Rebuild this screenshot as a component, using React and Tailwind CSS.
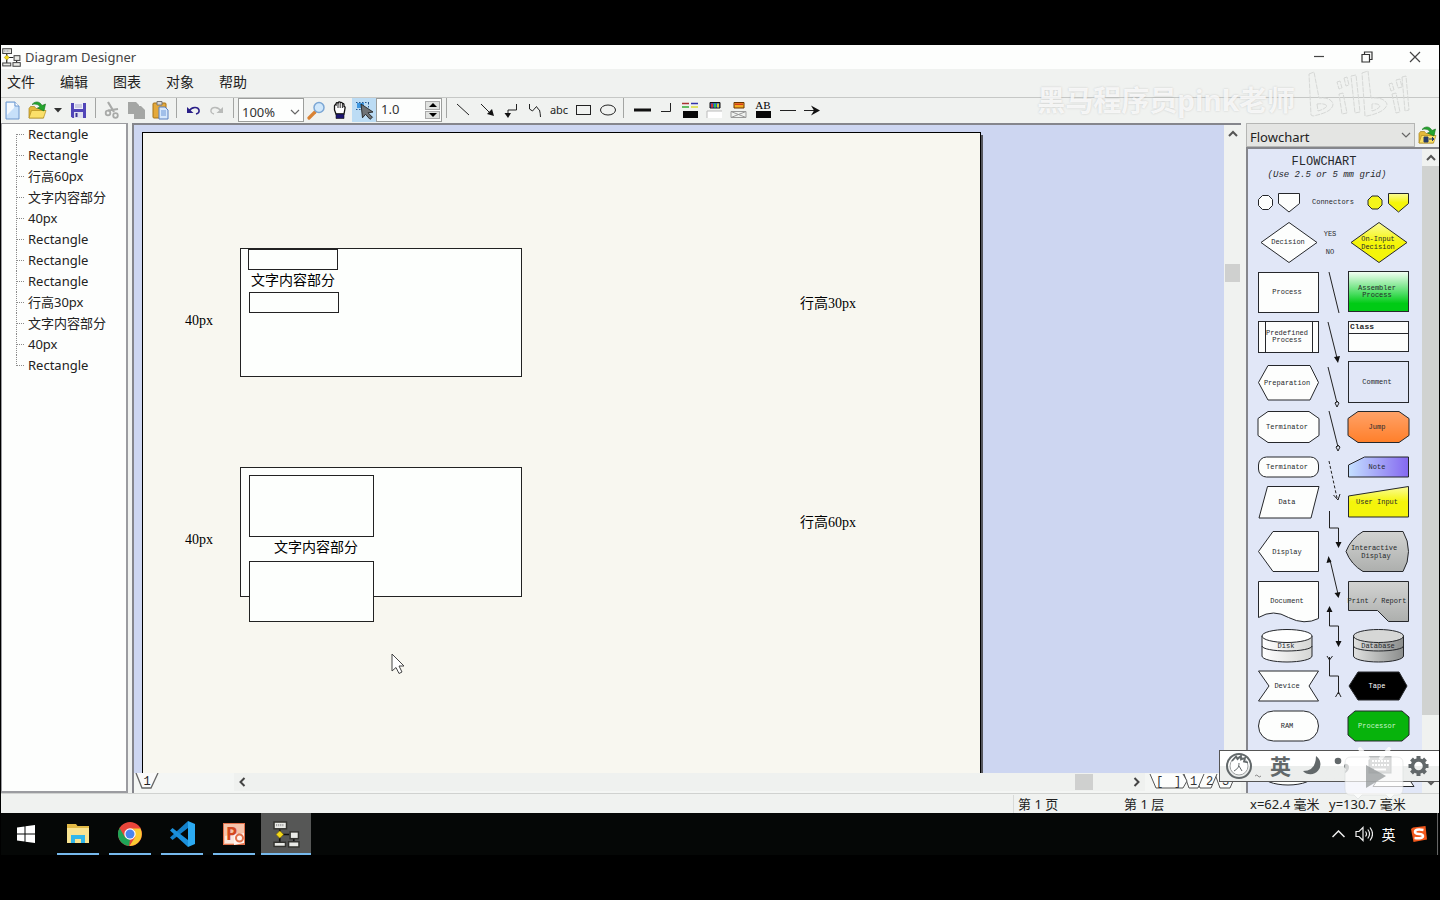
import React from "react";

const outline = { fill: "none", stroke: "#222", strokeWidth: 1 };

function ToolButton({ label, children, active }) {
  return (
    <button
      type="button"
      aria-label={label}
      title={label}
      className={
        active
          ? "flex h-6 w-6 shrink-0 items-center justify-center bg-[#bcdcf4]"
          : "flex h-6 w-6 shrink-0 items-center justify-center"
      }
    >
      <svg width="20" height="20" viewBox="0 0 20 20" aria-hidden="true">
        {children}
      </svg>
    </button>
  );
}

function Separator() {
  return (
    <div className="flex w-[9px] shrink-0 justify-center">
      <div className="h-5 w-px bg-[#a3a5a3]" />
    </div>
  );
}

function Chevron({ className }) {
  return (
    <svg width="10" height="6" viewBox="0 0 10 6" className={className} aria-hidden="true">
      <path d="M1 1l4 4 4-4" fill="none" stroke="#666" strokeWidth="1.2" />
    </svg>
  );
}

function DiagramLogo({ size, line, frame }) {
  return (
    <svg width={size} height={size} viewBox="0 0 26 26" aria-hidden="true">
      <path d="M6.500 8v10M6.500 13h9M6.500 18v3M20 17v4" stroke={line} strokeWidth="1.600" fill="none" />
      <g fill="#e9eae6" stroke={frame} strokeWidth="1.400">
        <rect x="1" y="1" width="12" height="6.500" />
        <rect x="16.500" y="10.500" width="8" height="6.500" />
        <rect x="1" y="20.500" width="11" height="4" />
        <rect x="15" y="20" width="10" height="5" />
      </g>
      <path d="M3 4h8" stroke="#999" strokeDasharray="1 1" strokeWidth="2" />
      <path d="M6.500 9.500l3.500 3.500-3.500 3.500L3 13z" fill="#f3d81b" stroke="#8a7400" strokeWidth="0.600" />
    </svg>
  );
}

function FolderArt() {
  return (
    <>
      <path d="M2 8.500l1.500-2h4l1.500 2h7.500V18H2z" fill="#e4b93a" stroke="#a8821a" strokeWidth=".7" />
      <path d="M2 18l2.500-7.500H19L16.500 18z" fill="#fbe06a" stroke="#b08c1e" strokeWidth=".7" />
      <path d="M5 4.500C8.500 .5 13 1.500 15 5.500l3.500-1.500-1.500 7L10.500 8l2.500-1C12 4.500 9 3.500 5 4.500z" fill="#25a52e" stroke="#127119" strokeWidth=".6" />
    </>
  );
}

const tree = [
  "Rectangle", "Rectangle", "行高60px", "文字内容部分", "40px", "Rectangle",
  "Rectangle", "Rectangle", "行高30px", "文字内容部分", "40px", "Rectangle",
];

function ObjectTree() {
  return (
    <aside className="w-[127px] shrink-0 overflow-hidden border-t border-r-2 border-b-2 border-l border-[#9b9ca0] bg-[#fdfefd]">
      <ul>
        {tree.map((name, i) => (
          <li key={i} className="flex h-[21px] items-center pl-3.5 text-[13px] text-[#222]">
            <svg width="10" height="21" viewBox="0 0 10 21" className="mr-[2px] shrink-0" aria-hidden="true">
              <path
                d={`M.5 ${i === 0 ? 10 : 0}V${i === tree.length - 1 ? 11 : 21}M1 10.500H9`}
                fill="none"
                stroke="#8b8b8b"
                strokeDasharray="1 1"
              />
            </svg>
            <span className="whitespace-nowrap">{name}</span>
          </li>
        ))}
      </ul>
    </aside>
  );
}

function Sheet() {
  const label = "absolute whitespace-nowrap font-['Liberation_Serif','Noto_Sans_CJK_SC',serif] text-[14px] leading-5 text-black";
  const box = "absolute border border-[#222] bg-[#fdfffd]";
  return (
    <div className="relative h-full w-[839px] border-x border-t border-black bg-[#f8f7f0] shadow-[2px_3px_0_#55565c]">
      <div className={`${box} top-[115px] left-[97px] h-[129px] w-[282px]`} />
      <div className={`${box} top-[116px] left-[105px] h-[21px] w-[90px]`} />
      <div className={`${box} top-[159px] left-[106px] h-[21px] w-[90px]`} />
      <span className={`${label} top-[138px] left-[108px]`}>文字内容部分</span>
      <span className={`${label} top-[178px] left-[42px]`}>40px</span>
      <span className={`${label} top-[161px] left-[657px]`}>行高30px</span>

      <div className={`${box} top-[334px] left-[97px] h-[130px] w-[282px]`} />
      <div className={`${box} top-[342px] left-[106px] h-[62px] w-[125px]`} />
      <div className={`${box} top-[428px] left-[106px] h-[61px] w-[125px]`} />
      <span className={`${label} top-[405px] left-[131px]`}>文字内容部分</span>
      <span className={`${label} top-[397px] left-[42px]`}>40px</span>
      <span className={`${label} top-[380px] left-[657px]`}>行高60px</span>

      <svg width="14" height="22" viewBox="0 0 14 22" className="absolute top-[520px] left-[248px]" aria-hidden="true">
        <path d="M1 1v17l4-3.500 3 6 3-1.500-3-6h5z" fill="#fff" stroke="#444" strokeWidth="1" />
      </svg>
    </div>
  );
}

function Canvas() {
  return (
    <main className="flex min-w-0 flex-1 flex-col border-t-2 border-l-2 border-[#85868c]">
      <div className="flex min-h-0 flex-1">
        <div className="min-w-0 flex-1 overflow-hidden bg-[#cdd6f1] pt-[7px] pl-2">
          <Sheet />
        </div>
        <div className="flex w-[17px] shrink-0 flex-col bg-[#f0f2f0]">
          <button type="button" aria-label="向上滚动" className="flex h-[17px] items-center justify-center">
            <svg width="10" height="8" viewBox="0 0 10 8" aria-hidden="true">
              <path d="M1 6l4-4 4 4" fill="none" stroke="#555" strokeWidth="2" />
            </svg>
          </button>
          <div className="mx-px mt-[122px] h-[18px] bg-[#cfd0cf]" />
        </div>
      </div>
      <div className="flex h-5 shrink-0 items-start bg-[#f4f6f4]">
        <button type="button" aria-label="第 1 页" className="w-[100px]">
          <svg width="30" height="18" viewBox="0 0 30 18" aria-hidden="true">
            <path d="M2 0l6 15h9l7-15" fill="#fafafa" stroke="#666" strokeWidth="1.300" />
            <text x="13" y="12" textAnchor="middle" fontFamily="Liberation Mono, monospace" fontSize="12" fill="#222">1</text>
          </svg>
        </button>
        <div className="flex h-[18px] min-w-0 flex-1 items-center justify-between bg-[#eff1ef] px-1">
          <button type="button" aria-label="向左滚动">
            <svg width="8" height="10" viewBox="0 0 8 10" aria-hidden="true">
              <path d="M6.500 1L2.500 5l4 4" fill="none" stroke="#444" strokeWidth="2" />
            </svg>
          </button>
          <div className="mr-10 ml-auto h-4 w-[18px] bg-[#cfd0cf]" />
          <button type="button" aria-label="向右滚动">
            <svg width="8" height="10" viewBox="0 0 8 10" aria-hidden="true">
              <path d="M1.500 1l4 4-4 4" fill="none" stroke="#444" strokeWidth="2" />
            </svg>
          </button>
        </div>
        <svg width="96" height="18" viewBox="0 0 96 18" className="shrink-0" role="img" aria-label="图层">
          <g fill="#fcfdfc" stroke="#555" strokeWidth="1">
            <path d="M70 1l5 14h10l6-14" />
            <path d="M55 1l-3 7 3 7h11l6-14" />
            <path d="M39 1l5 14h9l6-14" />
            <path d="M5 1l6 14h27l4-7-4-7" />
          </g>
          <g fontFamily="Liberation Mono, monospace" fontSize="12" fill="#333">
            <text x="11" y="12">[</text>
            <text x="29" y="12">]</text>
            <text x="45" y="12">1</text>
            <text x="61" y="12">2</text>
            <text x="77" y="12">3</text>
          </g>
        </svg>
      </div>
    </main>
  );
}

function T({ x, y, fill = "#26282c", children, ...rest }) {
  return (
    <text x={x} y={y} fill={fill} textAnchor="middle" {...rest}>
      {children}
    </text>
  );
}

function Octagon({ x, y, h, fill, c = 10, d = 7 }) {
  return <path d={`M${x + c} ${y}h${61 - 2 * c}l${c} ${d}v${h - 2 * d}l-${c} ${d}h-${61 - 2 * c}l-${c}-${d}v-${h - 2 * d}z`} fill={fill} />;
}

function Cylinder({ x, fill, top }) {
  return (
    <g>
      <path d={`M${x} 636v20a25 6 0 0 0 50 0v-20z`} fill={fill} />
      <path d={`M${x} 646a25 5 0 0 0 50 0`} fill="none" />
      <ellipse cx={x + 25} cy="636" rx="25" ry="6.500" fill={top} />
    </g>
  );
}

function ShapePalette() {
  return (
    <svg width="174" height="645" viewBox="1248 149 174 645" className="block shrink-0" role="img" aria-label="Flowchart">
      <defs>
        <linearGradient id="green" x2="0" y2="1"><stop offset="0" stopColor="#f6fff6" /><stop offset=".55" stopColor="#4bdd62" /><stop offset=".8" stopColor="#00cb15" /></linearGradient>
        <linearGradient id="yellow" x2="0" y2="1"><stop offset="0" stopColor="#fbfc9a" /><stop offset=".5" stopColor="#f5f50a" /></linearGradient>
        <linearGradient id="orange" x2="0" y2="1"><stop offset="0" stopColor="#ffa268" /><stop offset="1" stopColor="#ff7f2a" /></linearGradient>
        <linearGradient id="blue"><stop offset="0" stopColor="#c4e0ff" /><stop offset="1" stopColor="#8468f0" /></linearGradient>
        <linearGradient id="gray" x2="0" y2="1"><stop offset="0" stopColor="#d2d3d2" /><stop offset="1" stopColor="#adafad" /></linearGradient>
        <linearGradient id="steel"><stop offset="0" stopColor="#e0e1e0" /><stop offset="1" stopColor="#8b8d8c" /></linearGradient>
        <linearGradient id="silver"><stop offset="0" stopColor="#fff" /><stop offset="1" stopColor="#d5d6d4" /></linearGradient>
      </defs>
      <g stroke="#25272b" strokeWidth="1" fill="#fdfefd">
        <path d="M1262.500 195.500h6l4 4v6l-4 4h-6l-4-4v-6z" />
        <path d="M1278.500 193.500h21v10l-10.500 8.500-10.500-8.500z" />
        <path d="M1372 196h6l4 4v5l-4 4h-6l-4-4v-5z" fill="#f5f51c" />
        <path d="M1388.500 193.500h20v10l-10 8.500-10-8.500z" fill="url(#yellow)" />
        <path d="M1289 222.500l28 20-28 20-28-20z" />
        <path d="M1379 222.500l28 20-28 20-28-20z" fill="url(#yellow)" />
        <rect x="1258.500" y="272.500" width="60" height="40" />
        <rect x="1348.500" y="271.500" width="60" height="40" fill="url(#green)" />
        <rect x="1258.500" y="321.500" width="60" height="31" />
        <path d="M1265.500 321.500v31M1312.500 321.500v31" />
        <rect x="1348.500" y="321.500" width="60" height="30" />
        <path d="M1348 333.500h61" />
        <path d="M1268 365.500h42l8.500 17-8.500 17.500h-42l-9.500-17.500z" />
        <rect x="1348.500" y="361.500" width="60" height="41" fill="none" />
        <Octagon x={1258} y={411.5} h={31} fill="#fdfefd" />
        <Octagon x={1348} y={411.5} h={31} fill="url(#orange)" />
        <rect x="1258.500" y="457" width="60" height="20" rx="8" />
        <path d="M1348.500 465l16-8h44v20h-60z" fill="url(#blue)" />
        <path d="M1267.500 486.500h51.500l-8 31.500h-52z" />
        <path d="M1348.500 496l60-9.500v30.500h-60z" fill="url(#yellow)" />
        <path d="M1273 531.500h45.500v40h-45.500l-14.500-20z" />
        <path d="M1363 531.500h40q5.500 9 5.500 20t-5.500 20h-40q-12-7-17-20 5-13 17-20z" fill="url(#gray)" />
        <path d="M1258.500 581.500h60v37q-14 7-30-1-15-9-30 0z" />
        <path d="M1348.500 581.500h60v40h-20l-11-11h-29z" fill="url(#gray)" />
        <Cylinder x={1262} fill="url(#silver)" top="#fff" />
        <Cylinder x={1353.5} fill="url(#steel)" top="#d6d7d6" />
        <path d="M1258.500 671h60l-9.500 15 9.500 15h-60l10.500-15z" />
        <path d="M1358 672h41l8 14-8 14h-41l-9-14z" fill="#000" />
        <rect x="1258.500" y="711" width="60" height="30" rx="15" />
        <Octagon x={1348} y={711} h={30} c={7} d={6} fill="#07b30c" />
        <ellipse cx="1288" cy="775" rx="26" ry="10" />
        <path d="M1373 786.500h41l-8-12h-25z" />
      </g>
      <g stroke="#222" fill="none">
        <path d="M1329 272l10 41M1328 322l9 36M1328 367l9 36M1329 411l9 36" />
        <path d="M1329 461l8 37" strokeDasharray="3 2" />
        <path d="M1335 403l2 4 2-4-2-2zM1336 447l2 4 2-4-2-2zM1333.500 495l4.500 5 2-6" />
        <path d="M1329.500 511v17h9v15M1330 560l8 34M1329.500 610v16h9v17M1329.500 657v19h9v18" />
        <path d="M1327 656l2.500 4 3-4M1335.500 697l3-5 2.500 5" />
      </g>
      <g fill="#111">
        <path d="M1334 357l6-1-2 7zM1335.500 542h6l-3 6zM1326.500 563l5-1-3-6zM1334.500 593l6-1-2 6zM1326.500 612h6l-3-6zM1335.500 641h6l-3 6z" />
      </g>
      <g fontFamily="Liberation Mono, monospace" fontSize="7">
        <T x="1324" y="165" fontSize="12">FLOWCHART</T>
        <T x="1327" y="177" fontSize="9" fontStyle="italic">(Use 2.5 or 5 mm grid)</T>
        <T x="1333" y="204">Connectors</T>
        <T x="1288" y="244">Decision</T>
        <T x="1330" y="236">YES</T>
        <T x="1330" y="254">NO</T>
        <T x="1378" y="241">On-Input</T>
        <T x="1378" y="249">Decision</T>
        <T x="1287" y="294">Process</T>
        <T x="1377" y="290">Assembler</T>
        <T x="1377" y="297">Process</T>
        <T x="1287" y="335">Predefined</T>
        <T x="1287" y="342">Process</T>
        <T x="1362" y="329" fontSize="8" fontWeight="bold">Class</T>
        <T x="1287" y="385">Preparation</T>
        <T x="1377" y="384">Comment</T>
        <T x="1287" y="429">Terminator</T>
        <T x="1377" y="429">Jump</T>
        <T x="1287" y="469">Terminator</T>
        <T x="1377" y="469">Note</T>
        <T x="1287" y="504">Data</T>
        <T x="1377" y="504">User Input</T>
        <T x="1287" y="554">Display</T>
        <T x="1374" y="550">Interactive</T>
        <T x="1376" y="558">Display</T>
        <T x="1287" y="603">Document</T>
        <T x="1377" y="603">Print / Report</T>
        <T x="1286" y="648">Disk</T>
        <T x="1378" y="648">Database</T>
        <T x="1287" y="688">Device</T>
        <T x="1377" y="688" fill="#fff">Tape</T>
        <T x="1287" y="728">RAM</T>
        <T x="1377" y="728" fill="#c8f4ca">Processor</T>
      </g>
    </svg>
  );
}

function PalettePanel() {
  return (
    <aside className="flex w-[193px] shrink-0 flex-col">
      <div className="flex h-6 shrink-0">
        <div className="relative flex-1 border border-[#b5b6b4] bg-[#e4e5e3]">
          <select aria-label="Flowchart" className="h-full w-full appearance-none bg-transparent px-[3px] pb-1 text-[13px] leading-5 text-[#222]">
            <option>Flowchart</option>
          </select>
          <Chevron className="pointer-events-none absolute top-2 right-[3px]" />
        </div>
        <ToolButton label="打开模板">
          <FolderArt />
          <path d="M7 12h4v5H7zM12 14h5m-2-2l2 2-2 2" fill="#263c6a" stroke="#263c6a" />
        </ToolButton>
      </div>
      <div className="flex min-h-0 flex-1 overflow-hidden border-t-2 border-l-2 border-[#85868c] bg-[#e1e7f7]">
        <ShapePalette />
        <div className="flex min-w-0 flex-1 flex-col bg-[#f0f2f0]">
          <button type="button" aria-label="向上滚动模板" className="flex h-[17px] shrink-0 items-center justify-center">
            <svg width="10" height="8" viewBox="0 0 10 8" aria-hidden="true">
              <path d="M1 6l4-4 4 4" fill="none" stroke="#555" strokeWidth="2" />
            </svg>
          </button>
          <div className="h-[549px] shrink-0 bg-[#d0d2d0]" />
          <button type="button" aria-label="向下滚动模板" className="mt-auto flex h-[22px] items-center justify-center">
            <svg width="10" height="8" viewBox="0 0 10 8" aria-hidden="true">
              <path d="M1 2l4 4 4-4" fill="none" stroke="#555" strokeWidth="2" />
            </svg>
          </button>
        </div>
      </div>
    </aside>
  );
}

function Toolbar() {
  return (
    <div className="flex h-[25px] shrink-0 items-start overflow-hidden bg-[#f0f2f0]" role="toolbar">
      <ToolButton label="新建">
        <path d="M3 2h9l4 4v13H3z" fill="#c7e0fa" stroke="#6d97ce" />
        <path d="M4 3h7v5L4 15z" fill="#fff" opacity=".8" />
        <path d="M12 2v4h4" fill="#fff" stroke="#6d97ce" />
      </ToolButton>
      <ToolButton label="打开"><FolderArt /></ToolButton>
      <button type="button" aria-label="最近的文件" className="flex h-6 w-[18px] items-center justify-center">
        <svg width="8" height="5" viewBox="0 0 8 5" aria-hidden="true"><path d="M0 0h8L4 4.500z" fill="#333" /></svg>
      </button>
      <ToolButton label="保存">
        <path d="M2 3h15v15H3.500L2 16.500z" fill="#5146b8" />
        <path d="M5 3h9v6H5z" fill="#eef0fb" /><path d="M6 5h7M6 7h7" stroke="#a6a6c8" />
        <path d="M5 12h9v6H5z" fill="#dfe0f0" /><path d="M6.500 13h2v4h-2z" fill="#3d3494" />
      </ToolButton>
      <Separator />
      <ToolButton label="剪切">
        <path d="M6 2l6 10M16 9l-10 1.500" stroke="#a8aaa8" strokeWidth="2.200" />
        <circle cx="13.500" cy="15.500" r="2.300" fill="none" stroke="#a8aaa8" strokeWidth="1.800" />
        <circle cx="6" cy="13" r="2.300" fill="none" stroke="#a8aaa8" strokeWidth="1.800" />
      </ToolButton>
      <ToolButton label="复制">
        <path d="M2 2h8l3 3v1h2l4 4v9H8v-5H2z" fill="#a4a6a4" />
      </ToolButton>
      <ToolButton label="粘贴">
        <rect x="3" y="3" width="13" height="15" rx="1" fill="#e4a93b" stroke="#a67216" />
        <path d="M7 1.500h5V5H7z" fill="#d9d9d9" stroke="#777" />
        <path d="M9 7h6l3 3v9H9z" fill="#d6e7fb" stroke="#587fc0" /><path d="M11 11h5M11 13h5M11 15h5" stroke="#6d97d8" />
      </ToolButton>
      <Separator />
      <ToolButton label="撤销">
        <path d="M6 11c3-4.500 9-4.500 10-1 .4 2-1 3.500-3 4" fill="none" stroke="#2a1f88" strokeWidth="1.600" />
        <path d="M4 7v6h6.500z" fill="#2a1f88" />
      </ToolButton>
      <ToolButton label="重做">
        <path d="M14 11c-3-4.500-9-4.500-10-1-.4 2 1 3.500 3 4" fill="none" stroke="#b9bbb9" strokeWidth="1.400" />
        <path d="M16 7v6H9.500z" fill="#b9bbb9" />
      </ToolButton>
      <Separator />
      <div className="relative h-6 w-[66px] shrink-0 border border-[#9c9e9c] bg-[#fdfefd]">
        <select aria-label="缩放" className="h-full w-full appearance-none bg-transparent pb-1 pl-[3px] text-[13px] leading-5 text-[#333]">
          <option>100%</option>
        </select>
        <Chevron className="pointer-events-none absolute top-[10px] right-[3px]" />
      </div>
      <ToolButton label="缩放工具">
        <path d="M3 18l6-6" stroke="#d98234" strokeWidth="3.200" strokeLinecap="round" />
        <circle cx="13" cy="7.500" r="5" fill="#cfe7fb" stroke="#7ba6d4" strokeWidth="1.500" />
      </ToolButton>
      <ToolButton label="平移">
        <path d="M6 14L4.500 10V6q0-1.500 1.500-1V3.500Q7 2 8 3.200 9 1 10.500 2.500 12 2 12.500 3.500q1.500-.3 1.500 1.500v1.500q1.500 0 1 2L14 14z" fill="#fff" stroke="#111" strokeWidth="1.300" />
        <path d="M8 3.500V8M10.200 3V8M12.400 4V8" stroke="#111" strokeWidth=".9" />
        <path d="M6 14h8v4.500H6z" fill="#1b1470" stroke="#111" strokeWidth=".6" />
      </ToolButton>
      <ToolButton label="选择" active>
        <path d="M3 3h7v5H3z" fill="#3f97e0" /><path d="M2 2.500h13M2 9.500h8M14.500 3v5" stroke="#26568c" strokeDasharray="1.500 1.500" />
        <path d="M7 4l12 8-5 .8 4.500 4.500-2.500 2-4.500-5-3 3.500z" fill="#6f7275" stroke="#222" strokeWidth=".9" />
      </ToolButton>
      <div className="flex h-6 w-[66px] shrink-0 border border-[#9c9e9c] bg-[#fdfefd] p-px">
        <input aria-label="线宽" defaultValue="1.0" className="w-0 min-w-0 flex-1 bg-transparent pl-[3px] text-[13px] text-[#333] outline-none" />
        <div className="flex w-[15px] flex-col gap-px py-px">
          <button type="button" aria-label="增加" className="flex flex-1 items-center justify-center border border-[#aaa] bg-[#e0e2e0]">
            <svg width="8" height="4" viewBox="0 0 8 4" aria-hidden="true"><path d="M4 0l4 4H0z" /></svg>
          </button>
          <button type="button" aria-label="减少" className="flex flex-1 items-center justify-center border border-[#aaa] bg-[#e0e2e0]">
            <svg width="8" height="4" viewBox="0 0 8 4" aria-hidden="true"><path d="M0 0h8L4 4z" /></svg>
          </button>
        </div>
      </div>
      <Separator />
      <ToolButton label="直线"><path d="M4 4l12 11" {...outline} /></ToolButton>
      <ToolButton label="箭头"><path d="M4 4l9 9" {...outline} /><path d="M17 16l-2-7-5 5z" fill="#111" /></ToolButton>
      <ToolButton label="折线"><path d="M15.500 4v6H7v5" {...outline} /><path d="M3.500 13H10L7 18z" fill="#111" /></ToolButton>
      <ToolButton label="曲线"><path d="M4.500 4v5l3 2 4-4.500q1.500 3 3 3.500.8 3 1 7" {...outline} /></ToolButton>
      <button type="button" aria-label="文本" className="h-6 w-6 shrink-0 text-center text-[11px] leading-5 text-[#222]">abc</button>
      <ToolButton label="矩形"><rect x="3.500" y="5.500" width="14" height="9" {...outline} /></ToolButton>
      <ToolButton label="椭圆"><ellipse cx="11" cy="10" rx="7.500" ry="5" {...outline} /></ToolButton>
      <Separator />
      <div className="flex pl-0.5">
        <ToolButton label="线型"><path d="M2 10h17" stroke="#111" strokeWidth="3" /></ToolButton>
        <ToolButton label="转角"><path d="M5 11.500h9.500V3" {...outline} /></ToolButton>
        <ToolButton label="线条颜色">
          <path d="M2 3.500h7" stroke="#a33" strokeWidth="1.500" /><path d="M11 3.500h7" stroke="#33a" strokeWidth="1.500" /><path d="M2 7h7" stroke="#3a3" strokeWidth="1.500" /><path d="M11 7h7" stroke="#dd3" strokeWidth="1.500" />
          <path d="M3 11h15v7H3z" fill="#080808" />
        </ToolButton>
        <ToolButton label="填充颜色">
          <path d="M6 2.500h10v5.500H6z" fill="#2458c8" stroke="#111" /><path d="M7 3.500h2v4H7z" fill="#c33" /><path d="M10 3.500h2v4h-2z" fill="#3b4" /><path d="M13 3.500h2v4h-2z" fill="#dc3" />
          <path d="M3 11h15v7H3z" fill="#fff" /><path d="M3 18v-7h15" fill="none" stroke="#bbb" />
        </ToolButton>
        <ToolButton label="渐变颜色">
          <path d="M6 2.500h10v5.500H6z" fill="#f2a922" stroke="#6a3200" /><path d="M7 3.500h8V5H7z" fill="#d43b1c" />
          <path d="M3 11.500h15v6H3zM3 11.500l15 6M18 11.500l-15 6" fill="none" stroke="#999" />
        </ToolButton>
        <ToolButton label="文字颜色">
          <text x="11" y="9" textAnchor="middle" fontSize="11" fontFamily="Liberation Serif, serif">AB</text>
          <path d="M4 11h15v7H4z" fill="#080808" />
        </ToolButton>
        <ToolButton label="线样式"><path d="M4 10.500h16" {...outline} /></ToolButton>
        <ToolButton label="箭头样式"><path d="M4 10.500h12" {...outline} /><path d="M11 5.500l9 5-9 5 3-5z" fill="#111" /></ToolButton>
      </div>
    </div>
  );
}

function InputMethodBar() {
  return (
    <div className="absolute right-0 bottom-[31px] flex h-8 w-[220px] items-center border border-r-0 border-[#555] bg-linear-to-b from-white from-50% to-[#eceeed] to-50% pl-1.5 text-[#62686a]">
      <svg width="36" height="28" viewBox="0 0 36 28" aria-hidden="true">
        <circle cx="13" cy="14" r="12" fill="none" stroke="#62686a" strokeWidth="2" />
        <circle cx="13" cy="14" r="9" fill="#fff" stroke="#9ea2a3" strokeWidth="1" />
        <path d="M6 9l4-4.500 1.500 2.500 3.500-3v3.500l4-1.500-1 3.500 4 1" fill="none" stroke="#62686a" strokeWidth="1.800" />
        <path d="M13 11c0 5-2 6-5 8M13 14l3 5" fill="none" stroke="#62686a" />
        <path d="M29 24q2-2 3 0t3 0" fill="none" stroke="#888" />
      </svg>
      <button type="button" className="ml-2 text-[21px] leading-7 font-bold">英</button>
      <svg width="130" height="28" viewBox="0 0 130 28" className="ml-3" aria-hidden="true">
        <path d="M12 4a10 10 0 1 1-13 15q13 0 13-15z" transform="translate(1 0)" fill="#62686a" />
        <circle cx="35" cy="9" r="3.300" fill="#62686a" />
        <path d="M42 12a3 3 0 0 1 4 3q0 4-4 6l1-4a3 3 0 0 1-1-5z" fill="#62686a" />
        <rect x="66" y="5" width="22" height="16" fill="#8f9392" stroke="#62686a" />
        <path d="M69 9h17M69 13h17" stroke="#fff" strokeWidth="2" strokeDasharray="2 1" />
        <path d="M71 17.500h12" stroke="#fff" strokeWidth="2" />
        <g stroke="#62686a" fill="none">
          <circle cx="115.500" cy="14" r="6" strokeWidth="3.500" />
          <path d="M115.500 4v4M115.500 20v4M105.500 14h4M121.500 14h4M108.500 7l3 3M119.500 18l3 3M122.500 7l-3 3M111.500 18l-3 3" strokeWidth="4" />
        </g>
      </svg>
    </div>
  );
}

function TaskButton({ label, open, active, children }) {
  return (
    <button
      type="button"
      aria-label={label}
      className={
        active
          ? "relative flex h-full w-[50px] items-center justify-center bg-[#565756]"
          : "relative flex h-full w-[50px] items-center justify-center"
      }
    >
      {children}
      {open && <span className={active ? "absolute inset-x-0 bottom-0 h-0.5 bg-[#76b9ed]" : "absolute inset-x-1 bottom-0 h-0.5 bg-[#76b9ed]"} />}
    </button>
  );
}

function Taskbar() {
  return (
    <footer className="flex h-[42px] shrink-0 items-center gap-0.5 bg-[#050706]">
      <TaskButton label="开始">
        <svg width="18" height="18" viewBox="0 0 18 18" aria-hidden="true">
          <path d="M0 2.500l7.500-1v7H0zM8.500 1.300L18 0v8.500H8.500zM0 9.500h7.500v7L0 15.500zM8.500 9.500H18V18l-9.500-1.300z" fill="#fff" />
        </svg>
      </TaskButton>
      <TaskButton label="文件资源管理器" open>
        <svg width="24" height="22" viewBox="0 0 24 22" aria-hidden="true">
          <path d="M1 1h9l1.500 2H23v17H1z" fill="#e2b945" />
          <path d="M1 5h22v15H1z" fill="#f8e391" />
          <path d="M5 20v-8h14v8h-4v-4H9v4z" fill="#31b6ea" />
        </svg>
      </TaskButton>
      <TaskButton label="Google Chrome" open>
        <svg width="24" height="24" viewBox="0 0 24 24" aria-hidden="true">
          <circle cx="12" cy="12" r="12" fill="#e9453a" />
          <path d="M1.600 6L6.800 15 12 17.500 11 24A12 12 0 0 1 1.600 6z" fill="#1ea356" />
          <path d="M22.400 6.500A12 12 0 0 1 11.500 24L17.200 15 16.500 8 12 6.500z" fill="#fbcb32" />
          <circle cx="12" cy="12" r="5.700" fill="#fff" />
          <circle cx="12" cy="12" r="4.500" fill="#4b84ee" />
        </svg>
      </TaskButton>
      <TaskButton label="Visual Studio Code" open>
        <svg width="26" height="26" viewBox="0 0 26 26" aria-hidden="true">
          <path d="M19 0L1 16.500l2.500 2.500L19 7z" fill="#1380ca" />
          <path d="M19 26L1 9.500 3.500 7 19 19z" fill="#1b90dc" />
          <path d="M19 0l7 3v20l-7 3z" fill="#2caaf2" />
        </svg>
      </TaskButton>
      <TaskButton label="PowerPoint" open>
        <svg width="24" height="24" viewBox="0 0 24 24" aria-hidden="true">
          <path d="M1 1h22v22H1z" fill="#e2714b" />
          <path d="M2 2h20v9h-6v11H2z" fill="#f6c3aa" />
          <path d="M12 12l10-1v10l-10 2z" fill="#fff4ee" />
          <circle cx="17.500" cy="16" r="3.500" fill="none" stroke="#e2714b" strokeWidth="2" />
          <path d="M3 14l9-2v9H3z" fill="#fff" opacity=".6" />
          <text x="4" y="18" fontFamily="Noto Sans, sans-serif" fontWeight="bold" fontSize="18" fill="#d3481f">P</text>
        </svg>
      </TaskButton>
      <TaskButton label="Diagram Designer" open active><DiagramLogo size={27} line="#111" frame="#33332f" /></TaskButton>
      <div className="ml-auto flex h-full items-center text-white">
        <button type="button" aria-label="显示隐藏的图标" className="flex w-[25px] justify-center">
          <svg width="13" height="8" viewBox="0 0 13 8" aria-hidden="true"><path d="M.5 7l6-6 6 6" fill="none" stroke="#eee" strokeWidth="1.500" /></svg>
        </button>
        <button type="button" aria-label="音量" className="flex w-[25px] justify-center">
          <svg width="18" height="16" viewBox="0 0 18 16" aria-hidden="true">
            <path d="M1 5.500h3l4-4v13l-4-4H1zM10.500 5.500q2 2.500 0 5M12.800 3.500q3.500 4.500 0 9M15 1.500q5 6.500 0 13" fill="none" stroke="#eee" strokeWidth="1.200" />
          </svg>
        </button>
        <button type="button" className="w-[25px] text-center text-[14px]">英</button>
        <button type="button" aria-label="搜狗输入法" className="ml-2 flex w-[20px] justify-center">
          <svg width="18" height="18" viewBox="0 0 18 18" aria-hidden="true">
            <path d="M3 2.500L15.500 1 17 14.500 3.500 17 1 4z" fill="#f2581c" />
            <path d="M13.500 5Q5 3.500 5 7q0 1.800 4 2t4 2q0 3-8.500 2" fill="none" stroke="#fff" strokeWidth="2.500" />
          </svg>
        </button>
        <div className="mr-px ml-2 h-full w-px bg-[#666]" />
      </div>
    </footer>
  );
}

function VideoMarks() {
  return (
    <>
      <div className="pointer-events-none absolute top-[25px] right-[24px] flex items-end gap-2.5" aria-hidden="true">
        <span className="pb-0.5 text-[28px] leading-9 font-bold whitespace-nowrap text-white/80 [text-shadow:0_0_2px_rgba(100,100,100,0.3)]">黑马程序员pink老师</span>
        <svg width="110" height="50" viewBox="0 0 110 50">
          <g fill="none" stroke="#d6d8d6" strokeWidth="1" strokeDasharray="5 1">
            <path d="M4 4l5-2 5 26q12-1 14 6 0 8-20 12L6 45zM12 34l1 7q7-2 9-5-2-3-10-2z" />
            <path d="M34 24l4-1 4 20-5 1zM32 12l3-1 2 7-3 1zM39 8l3-1 2 8-3 1zM46 6l5-1 4 37-5 1z" />
            <path d="M57 3l6-2 3 27q13-1 16 6-1 8-20 12h-2zM67 34v7q7-2 8-5-2-3-8-2z" />
            <path d="M87 24l4-1 4 19-4 1zM84 14l3-1 2 7-3 1zM91 10l4-1 2 8-4 1zM97 7l4-1 3 34-4 1z" />
          </g>
        </svg>
      </div>
      <svg width="62" height="54" viewBox="0 0 62 54" className="pointer-events-none absolute right-[34px] bottom-[12px]" aria-hidden="true">
        <path d="M17 2l8 9M46 2l-8 9" stroke="#fff" strokeWidth="4" opacity=".8" strokeLinecap="round" />
        <path d="M8 10h46q6 0 6 6v26q0 6-6 6h-3l-4 4-4-4H19l-4 4-4-4H8q-6 0-6-6V16q0-6 6-6z" fill="#fff" opacity=".7" stroke="#d6d8d8" strokeWidth=".7" />
        <path d="M23 18l20 11-20 12z" fill="#8f9394" opacity=".7" />
      </svg>
    </>
  );
}

export default function App() {
  return (
    <div className="flex h-screen min-h-[640px] flex-col bg-black px-px py-[45px] font-['Noto_Sans','Noto_Sans_CJK_SC',sans-serif] select-none">
      <div className="relative flex min-h-0 flex-1 flex-col bg-[#f0f2f0]">
        <header className="flex h-6 shrink-0 items-center bg-[#fdfefd] pl-px">
          <DiagramLogo size={19} line="#222" frame="#444" />
          <h1 className="ml-1 text-[13px] leading-6 text-[#444]">Diagram Designer</h1>
          <div className="ml-auto flex">
            <button type="button" aria-label="最小化" className="flex w-12 justify-center">
              <svg width="12" height="12" viewBox="0 0 12 12" aria-hidden="true"><path d="M1 5.500h10" stroke="#444" strokeWidth="1.200" /></svg>
            </button>
            <button type="button" aria-label="还原" className="flex w-12 justify-center">
              <svg width="12" height="12" viewBox="0 0 12 12" aria-hidden="true"><path d="M1 3.500h7.500V11H1zM3.500 3.500V1H11v7.500H8.500" fill="none" stroke="#333" strokeWidth="1.200" /></svg>
            </button>
            <button type="button" aria-label="关闭" className="flex w-12 justify-center">
              <svg width="12" height="12" viewBox="0 0 12 12" aria-hidden="true"><path d="M1 1l10 10M11 1L1 11" stroke="#444" strokeWidth="1.200" /></svg>
            </button>
          </div>
        </header>
        <nav className="flex h-[29px] shrink-0 items-start gap-[25px] border-b border-[#c6c8c6] px-1.5 pt-px text-[14px] leading-6 text-[#222]">
          <button type="button">文件</button>
          <button type="button">编辑</button>
          <button type="button">图表</button>
          <button type="button">对象</button>
          <button type="button">帮助</button>
        </nav>
        <Toolbar />
        <div className="flex min-h-0 flex-1">
          <ObjectTree />
          <div className="w-1 shrink-0" />
          <Canvas />
          <div className="w-[5px] shrink-0" />
          <PalettePanel />
        </div>
        <div className="flex h-5 shrink-0 items-center border-t border-[#d0d2d0] text-[13px] leading-[18px] whitespace-nowrap text-[#222]">
          <span className="ml-auto w-[107px] border-l border-[#d8dad8] pl-1">第 1 页</span>
          <span className="w-[130px] pl-1">第 1 层</span>
          <span className="w-[79px]">x=62.4 毫米</span>
          <span className="w-[110px]">y=130.7 毫米</span>
        </div>
        <InputMethodBar />
        <VideoMarks />
      </div>
      <Taskbar />
    </div>
  );
}
